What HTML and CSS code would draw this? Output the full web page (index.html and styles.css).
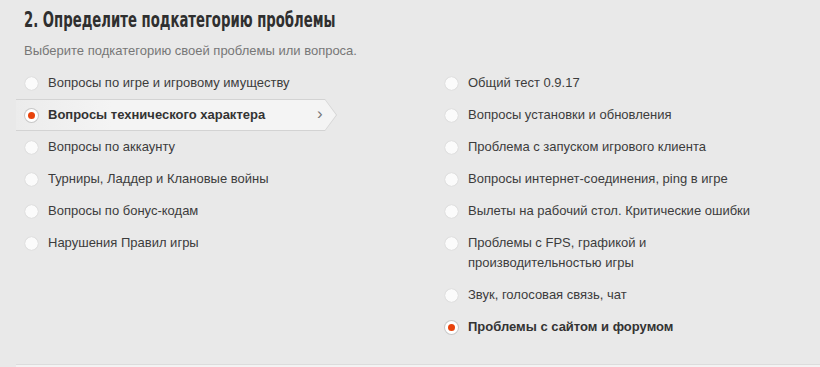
FILE: index.html
```html
<!DOCTYPE html>
<html>
<head>
    <title>Подкатегория проблемы</title>
    <meta charset="utf-8">
    <link rel="stylesheet" href="styles.css">
</head>
<body>
    <div class="step">
        <h2 class="step-title"><span>2. Определите подкатегорию проблемы</span></h2>
        <p class="step-hint">Выберите подкатегорию своей проблемы или вопроса.</p>

        <div class="columns">
            <ul class="options">
                <li class="option"><span class="radio"></span><span class="label">Вопросы по игре и игровому имуществу</span></li>
                <li class="option option-active"><span class="radio radio-on"></span><span class="label">Вопросы технического характера</span><span class="chevron">&rsaquo;</span></li>
                <li class="option"><span class="radio"></span><span class="label">Вопросы по аккаунту</span></li>
                <li class="option"><span class="radio"></span><span class="label">Турниры, Ладдер и Клановые войны</span></li>
                <li class="option"><span class="radio"></span><span class="label">Вопросы по бонус-кодам</span></li>
                <li class="option"><span class="radio"></span><span class="label">Нарушения Правил игры</span></li>
            </ul>
            <ul class="options">
                <li class="option"><span class="radio"></span><span class="label">Общий тест 0.9.17</span></li>
                <li class="option"><span class="radio"></span><span class="label">Вопросы установки и обновления</span></li>
                <li class="option"><span class="radio"></span><span class="label">Проблема с запуском игрового клиента</span></li>
                <li class="option"><span class="radio"></span><span class="label">Вопросы интернет-соединения, ping в игре</span></li>
                <li class="option"><span class="radio"></span><span class="label">Вылеты на рабочий стол. Критические ошибки</span></li>
                <li class="option"><span class="radio"></span><span class="label">Проблемы с FPS, графикой и производительностью игры</span></li>
                <li class="option"><span class="radio"></span><span class="label">Звук, голосовая связь, чат</span></li>
                <li class="option option-picked"><span class="radio radio-on"></span><span class="label">Проблемы с сайтом и форумом</span></li>
            </ul>
        </div>
    </div>
    <div class="next-step"></div>
</body>
</html>
```

FILE: styles.css
```css
/* Support form, step 2 */
body {
    margin: 0;
    background: #e9e9e9;
    color: #3c3c3c;
    font-family: 'Liberation Sans', Arial, sans-serif;
    font-size: 13px;
    overflow: hidden;
}

.step {
    height: 364px;
    box-sizing: border-box;
    padding: 8px 0 0 16px;
}

.step-title {
    margin: 0 0 0 8px;
    font-family: 'DejaVu Sans Condensed', 'DejaVu Sans', sans-serif;
    font-stretch: condensed;
    font-weight: bold;
    font-size: 21px;
    line-height: 24px;
    color: #2f2f2f;
    white-space: nowrap;
}

/* the original heading face is much narrower than anything installed */
.step-title span {
    display: inline-block;
    transform: scaleX(0.7);
    transform-origin: left center;
}

.step-hint {
    margin: 10px 0 0 8px;
    line-height: 18px;
    color: #777;
}

.columns {
    display: grid;
    grid-template-columns: 320px 340px;
    column-gap: 100px;
    margin-top: 7px;
}

.options {
    list-style: none;
    margin: 0;
    padding: 0;
}

.option {
    position: relative;
    display: flex;
    align-items: flex-start;
    padding: 6px 0 6px 10px;
    line-height: 20px;
}

.label {
    position: relative;
    z-index: 1;
    max-width: 300px;
}

.option-active .label,
.option-picked .label {
    font-weight: bold;
    color: #333;
}

/* selected row: light tab with an arrow tip */
.option-active::before,
.option-active::after {
    content: "";
    position: absolute;
    top: 0;
    bottom: 0;
    left: 0;
    right: -1px;
    clip-path: polygon(0 0, 309px 0, 100% 50%, 309px 100%, 0 100%);
}

.option-active::before {
    background: #d3d3d3;
}

.option-active::after {
    top: 1px;
    bottom: 1px;
    right: 0;
    background: linear-gradient(to right, #ececec, #f4f4f4 30%, #f4f4f4);
    clip-path: polygon(0 0, 309px 0, 100% 50%, 309px 100%, 0 100%);
}

.chevron {
    position: absolute;
    top: 5px;
    left: 301px;
    z-index: 1;
    font-size: 17px;
    color: #777;
}

.radio {
    position: relative;
    z-index: 1;
    flex: none;
    width: 13px;
    height: 13px;
    margin: 4px 10px 0 -1px;
    border-radius: 50%;
    background: #fbfbfb;
    box-shadow: 0 0 1px rgba(0, 0, 0, 0.25);
}

.radio-on {
    background: #fff;
    box-shadow: 0 0 0 1px #c8c8c8;
}

.radio-on::after {
    content: "";
    position: absolute;
    top: 3px;
    left: 3px;
    width: 7px;
    height: 7px;
    border-radius: 50%;
    background: #e8430c;
}

.next-step {
    margin-left: 16px;
    height: 3px;
    border-top: 1px solid #dcdcdc;
    background: #f3f3f3;
}
```
